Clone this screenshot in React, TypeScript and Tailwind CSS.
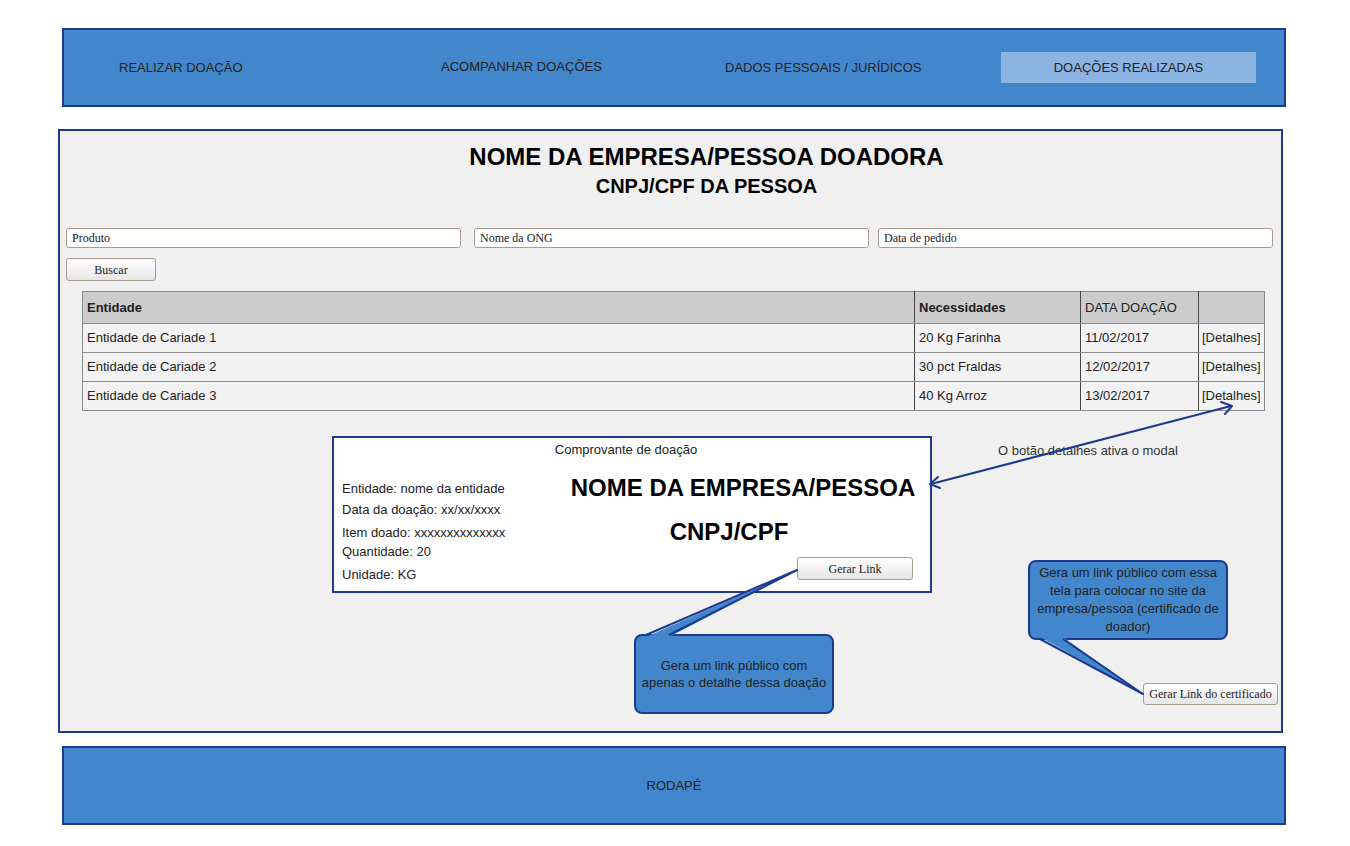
import React from "react";

const rows = [
  { ent: "Entidade de Cariade 1", nec: "20 Kg Farinha", data: "11/02/2017" },
  { ent: "Entidade de Cariade 2", nec: "30 pct Fraldas", data: "12/02/2017" },
  { ent: "Entidade de Cariade 3", nec: "40 Kg Arroz", data: "13/02/2017" },
];

function SearchInput({ value, className }: { value: string; className?: string }) {
  return (
    <input
      readOnly
      defaultValue={value}
      className={`h-[20px] w-[395px] rounded-[3px] border border-[#a89c8c] bg-white px-[5px] font-['Liberation_Serif',serif] text-[12px] text-[#222] outline-none ${className ?? ""}`}
    />
  );
}

function GreyButton({ label, className }: { label: string; className?: string }) {
  return (
    <button className={`rounded-[3px] border border-[#a89c8c] bg-gradient-to-b from-white to-[#e6e6e6] font-['Liberation_Serif',serif] text-[12px] text-[#222] ${className ?? ""}`}>
      {label}
    </button>
  );
}

export default function App() {
  return (
    <div className="relative h-[846px] w-[1350px] overflow-hidden bg-white font-['Liberation_Sans',Arial,sans-serif] text-[13px] text-[#222]">
      {/* menu */}
      <div className="ml-[62px] mt-[28px] flex h-[79px] w-[1224px] items-center border-2 border-[#1d3a8f] bg-[#4287cc]">
        <div className="w-[377px] pl-[55px]">REALIZAR DOAÇÃO</div>
        <div className="mb-[1px] w-[284px]">ACOMPANHAR DOAÇÕES</div>
        <div className="w-[276px]">DADOS PESSOAIS / JURÍDICOS</div>
        <div className="flex h-[31px] w-[255px] items-center justify-center bg-[#8bb4e2]">DOAÇÕES REALIZADAS</div>
      </div>

      {/* content */}
      <div className="relative ml-[58px] mt-[22px] h-[604px] w-[1225px] border-2 border-[#1d3a8f] bg-[#f0f0f0]">
        <div className="pl-[72px] text-center text-black">
          <h1 className="mt-[12px] text-[24px] font-bold leading-[28px]">NOME DA EMPRESA/PESSOA DOADORA</h1>
          <h2 className="mt-[3px] text-[20px] font-bold leading-[24px]">CNPJ/CPF DA PESSOA</h2>
        </div>

        <div className="ml-[6px] mt-[30px] flex">
          <SearchInput value="Produto" />
          <SearchInput value="Nome da ONG" className="ml-[13px]" />
          <SearchInput value="Data de pedido" className="ml-[9px]" />
        </div>
        <GreyButton label="Buscar" className="ml-[6px] mt-[10px] h-[23px] w-[90px]" />

        <table className="ml-[22px] mt-[10px] w-[1182px] table-fixed border-collapse">
          <colgroup>
            <col className="w-[832px]" />
            <col className="w-[166px]" />
            <col className="w-[118px]" />
            <col className="w-[66px]" />
          </colgroup>
          <thead>
            <tr className="h-[32px] bg-[#cccccc] text-left font-bold">
              <th className="border border-[#8a8a8a] border-r-[#444] pl-[4px]">Entidade</th>
              <th className="border border-[#8a8a8a] border-x-[#444] pl-[4px]">Necessidades</th>
              <th className="border border-[#8a8a8a] border-x-[#444] pl-[4px] font-normal">DATA DOAÇÃO</th>
              <th className="border border-[#8a8a8a] border-l-[#444]"></th>
            </tr>
          </thead>
          <tbody>
            {rows.map((r) => (
              <tr key={r.ent} className="h-[29px] bg-[#f2f2f2]">
                <td className="border border-[#8a8a8a] border-r-[#444] pl-[4px]">{r.ent}</td>
                <td className="border border-[#8a8a8a] border-x-[#444] pl-[4px]">{r.nec}</td>
                <td className="border border-[#8a8a8a] border-x-[#444] pl-[4px]">{r.data}</td>
                <td className="border border-[#8a8a8a] border-l-[#444] pl-[3px]">[Detalhes]</td>
              </tr>
            ))}
          </tbody>
        </table>

        {/* modal */}
        <div className="ml-[272px] mt-[25px] h-[157px] w-[600px] border-2 border-[#1d3a8f] bg-white">
          <div className="mt-[4px] pr-[12px] text-center leading-[16px]">Comprovante de doação</div>
          <div className="flex">
            <div className="w-[222px] pl-[8px] pt-[23px] leading-[16px]">
              <div>Entidade: nome da entidade</div>
              <div className="mt-[5px]">Data da doação: xx/xx/xxxx</div>
              <div className="mt-[7px]">Item doado: xxxxxxxxxxxxxx</div>
              <div className="mt-[3px]">Quantidade: 20</div>
              <div className="mt-[7px]">Unidade: KG</div>
            </div>
            <div className="flex flex-1 flex-col items-center pt-[16px]">
              <div className="text-[24px] font-bold leading-[28px] text-black">NOME DA EMPRESA/PESSOA</div>
              <div className="mr-[28px] mt-[16px] text-[24px] font-bold leading-[28px] text-black">CNPJ/CPF</div>
              <GreyButton label="Gerar Link" className="mr-[17px] mt-[11px] h-[23px] w-[116px] self-end" />
            </div>
          </div>
        </div>

        {/* notes */}
        <div className="absolute left-[938px] top-[312px] leading-[16px] text-[#333]">O botão detalhes ativa o modal</div>
        <div className="absolute left-[574px] top-[503px] flex h-[80px] w-[200px] items-center justify-center rounded-[8px] border-2 border-[#1d3a8f] bg-[#4287cc] text-center leading-[17px]">
          Gera um link público com
          <br />
          apenas o detalhe dessa doação
        </div>
        <div className="absolute left-[968px] top-[429px] h-[80px] w-[200px] rounded-[8px] border-2 border-[#1d3a8f] bg-[#4287cc] pt-[2px] text-center leading-[18px]">
          Gera um link público com essa
          <br />
          tela para colocar no site da
          <br />
          empresa/pessoa (certificado de
          <br />
          doador)
        </div>
        <GreyButton label="Gerar Link do certificado" className="absolute left-[1083px] top-[552px] h-[22px] w-[135px]" />
      </div>

      {/* footer */}
      <div className="ml-[62px] mt-[13px] flex h-[79px] w-[1224px] items-center justify-center border-2 border-[#1d3a8f] bg-[#4287cc]">
        RODAPÉ
      </div>

      {/* arrows and callout tails */}
      <svg className="pointer-events-none absolute left-0 top-0" width="1350" height="846" viewBox="0 0 1350 846">
        <g stroke="#1d3a8f" strokeWidth="2" fill="none" strokeLinecap="round" strokeLinejoin="round">
          <line x1="931" y1="484" x2="1231" y2="406" />
          <polyline points="938,477 930,484 940,488" />
          <polyline points="1221,402 1232,406 1225,414" />
        </g>
        <polygon points="646,637 797,570 669,637" fill="#4287cc" />
        <polyline points="646,635 797,570 669,635" fill="none" stroke="#1d3a8f" strokeWidth="2" strokeLinejoin="round" />
        <polygon points="1040,637 1143,694 1063,637" fill="#4287cc" />
        <polyline points="1040,639 1143,694 1063,639" fill="none" stroke="#1d3a8f" strokeWidth="2" strokeLinejoin="round" />
      </svg>
    </div>
  );
}
